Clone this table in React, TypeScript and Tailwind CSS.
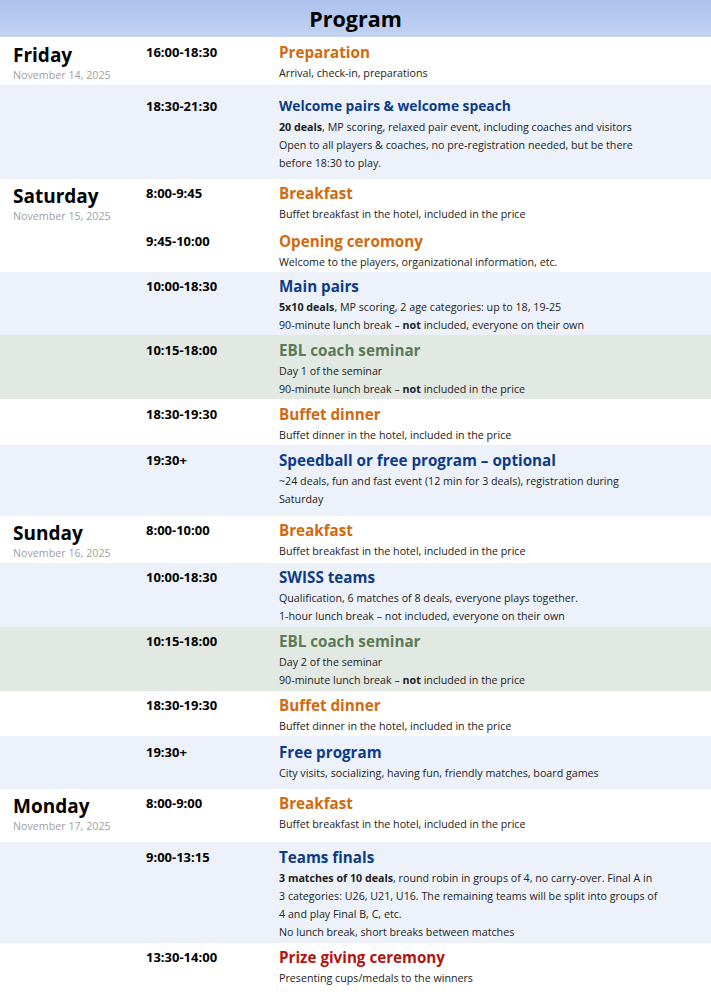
import React from "react";

type Item = {
  time: string;
  title: string;
  color: string;
  small?: boolean;
  lines: React.ReactNode[];
};

type Row = {
  bg: string;
  pad: string;
  day?: string;
  date?: string;
  items: Item[];
};

const ORANGE = "text-[#d2690f]";
const BLUE = "text-[#0c3b88]";
const GREEN = "text-[#5b7a57]";
const RED = "text-[#b3140d]";

const rows: Row[] = [
  {
    bg: "bg-white",
    pad: "pt-[4px] pb-[3px]",
    day: "Friday",
    date: "November 14, 2025",
    items: [{ time: "16:00-18:30", title: "Preparation", color: ORANGE, lines: ["Arrival, check-in, preparations"] }],
  },
  {
    bg: "bg-[#edf2fa]",
    pad: "pt-[10px] pb-[7px]",
    items: [
      {
        time: "18:30-21:30",
        title: "Welcome pairs & welcome speach",
        color: BLUE,
        small: true,
        lines: [
          <><b>20 deals</b>, MP scoring, relaxed pair event, including coaches and visitors</>,
          "Open to all players & coaches, no pre-registration needed, but be there",
          "before 18:30 to play.",
        ],
      },
    ],
  },
  {
    bg: "bg-white",
    pad: "pt-[3px] pb-[1px]",
    day: "Saturday",
    date: "November 15, 2025",
    items: [
      { time: "8:00-9:45", title: "Breakfast", color: ORANGE, lines: ["Buffet breakfast in the hotel, included in the price"] },
      { time: "9:45-10:00", title: "Opening ceromony", color: ORANGE, lines: ["Welcome to the players, organizational information, etc."] },
    ],
  },
  {
    bg: "bg-[#edf2fa]",
    pad: "pt-[3px] pb-[1px]",
    items: [
      {
        time: "10:00-18:30",
        title: "Main pairs",
        color: BLUE,
        lines: [
          <><b>5x10 deals</b>, MP scoring, 2 age categories: up to 18, 19-25</>,
          <>90-minute lunch break – <b>not</b> included, everyone on their own</>,
        ],
      },
    ],
  },
  {
    bg: "bg-[#e2e9e2]",
    pad: "pt-[4px] pb-[1px]",
    items: [
      {
        time: "10:15-18:00",
        title: "EBL coach seminar",
        color: GREEN,
        lines: ["Day 1 of the seminar", <>90-minute lunch break – <b>not</b> included in the price</>],
      },
    ],
  },
  {
    bg: "bg-white",
    pad: "pt-[4px] pb-[1px]",
    items: [{ time: "18:30-19:30", title: "Buffet dinner", color: ORANGE, lines: ["Buffet dinner in the hotel, included in the price"] }],
  },
  {
    bg: "bg-[#edf2fa]",
    pad: "pt-[4px] pb-[8px]",
    items: [
      {
        time: "19:30+",
        title: "Speedball or free program – optional",
        color: BLUE,
        lines: ["~24 deals, fun and fast event (12 min for 3 deals), registration during", "Saturday"],
      },
    ],
  },
  {
    bg: "bg-white",
    pad: "pt-[3px] pb-[3px]",
    day: "Sunday",
    date: "November 16, 2025",
    items: [{ time: "8:00-10:00", title: "Breakfast", color: ORANGE, lines: ["Buffet breakfast in the hotel, included in the price"] }],
  },
  {
    bg: "bg-[#edf2fa]",
    pad: "pt-[3px] pb-[2px]",
    items: [
      {
        time: "10:00-18:30",
        title: "SWISS teams",
        color: BLUE,
        lines: [
          "Qualification, 6 matches of 8 deals, everyone plays together.",
          "1-hour lunch break – not included, everyone on their own",
        ],
      },
    ],
  },
  {
    bg: "bg-[#e2e9e2]",
    pad: "pt-[3px] pb-[2px]",
    items: [
      {
        time: "10:15-18:00",
        title: "EBL coach seminar",
        color: GREEN,
        lines: ["Day 2 of the seminar", <>90-minute lunch break – <b>not</b> included in the price</>],
      },
    ],
  },
  {
    bg: "bg-white",
    pad: "pt-[3px] pb-[1px]",
    items: [{ time: "18:30-19:30", title: "Buffet dinner", color: ORANGE, lines: ["Buffet dinner in the hotel, included in the price"] }],
  },
  {
    bg: "bg-[#edf2fa]",
    pad: "pt-[5px] pb-[7px]",
    items: [
      {
        time: "19:30+",
        title: "Free program",
        color: BLUE,
        lines: ["City visits, socializing, having fun, friendly matches, board games"],
      },
    ],
  },
  {
    bg: "bg-white",
    pad: "pt-[3px] pb-[9px]",
    day: "Monday",
    date: "November 17, 2025",
    items: [{ time: "8:00-9:00", title: "Breakfast", color: ORANGE, lines: ["Buffet breakfast in the hotel, included in the price"] }],
  },
  {
    bg: "bg-[#edf2fa]",
    pad: "pt-[4px] pb-[2px]",
    items: [
      {
        time: "9:00-13:15",
        title: "Teams finals",
        color: BLUE,
        lines: [
          <><b>3 matches of 10 deals</b>, round robin in groups of 4, no carry-over. Final A in</>,
          "3 categories: U26, U21, U16. The remaining teams will be split into groups of",
          "4 and play Final B, C, etc.",
          "No lunch break, short breaks between matches",
        ],
      },
    ],
  },
  {
    bg: "bg-white",
    pad: "pt-[3px] pb-[8px]",
    items: [{ time: "13:30-14:00", title: "Prize giving ceremony", color: RED, lines: ["Presenting cups/medals to the winners"] }],
  },
];

function Event({ item }: { item: Item }) {
  return (
    <div className="grid grid-cols-[133px_1fr]">
      <div className="text-[13px] leading-[22px] font-bold text-black">{item.time}</div>
      <div>
        <div
          className={`${item.color} font-bold leading-[22px] ${item.small ? "text-[13.8px]" : "text-[15.2px]"}`}
        >
          {item.title}
        </div>
        <div className="mt-[1px] text-[10.7px] leading-[18px] text-[#222]">
          {item.lines.map((l, i) => (
            <div key={i} className="whitespace-nowrap">
              {l}
            </div>
          ))}
        </div>
      </div>
    </div>
  );
}

export default function App() {
  return (
    <div className="w-[711px] min-h-[995px] bg-white font-['Open_Sans',sans-serif]">
      <div className="h-[37px] bg-gradient-to-b from-[#acc1ec] to-[#c3d3f2] flex items-center justify-center">
        <h1 className="text-[21.5px] font-bold text-black leading-none">Program</h1>
      </div>
      {rows.map((r, i) => (
        <div key={i} className={`${r.bg} ${r.pad} grid grid-cols-[133px_1fr] pl-[13px]`}>
          <div>
            {r.day && (
              <div className="pt-[1px]">
                <div className="text-[19px] font-bold leading-[26px] text-black">{r.day}</div>
                <div className="text-[10.7px] leading-[13px] text-[#a0a0a0] mt-[1px]">{r.date}</div>
              </div>
            )}
          </div>
          <div className="flex flex-col gap-[7px]">
            {r.items.map((it, j) => (
              <Event key={j} item={it} />
            ))}
          </div>
        </div>
      ))}
    </div>
  );
}
